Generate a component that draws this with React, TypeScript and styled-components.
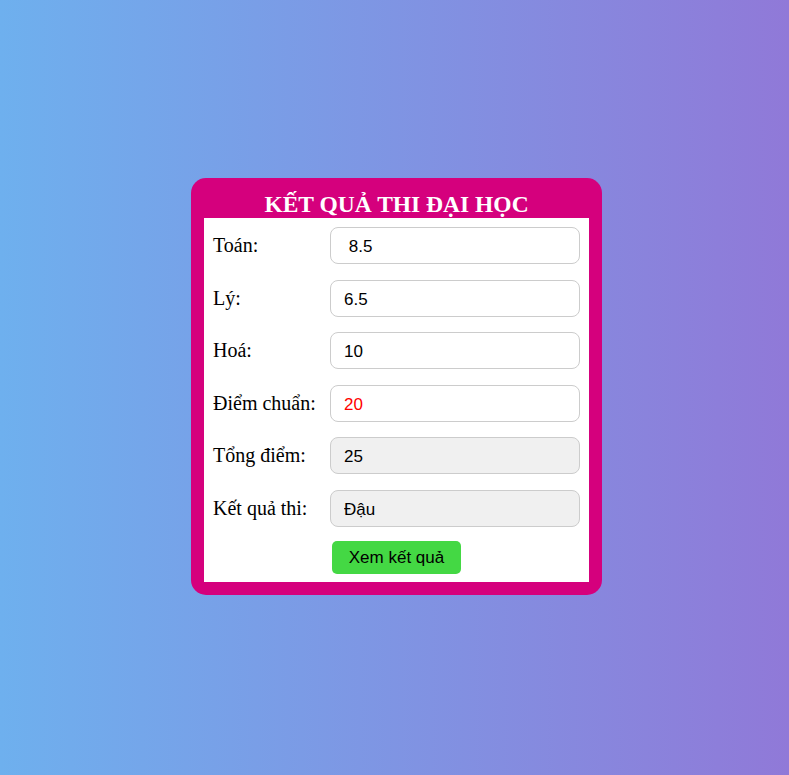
import React from "react";
import styled, { createGlobalStyle } from "styled-components";

const Global = createGlobalStyle`
  html, body { margin: 0; padding: 0; }
  body { font-family: "Liberation Serif", "Times New Roman", serif; }
`;

const Page = styled.div`
  height: 775px;
  background: linear-gradient(to right, #6eb0ee, #9079d8);
  display: flex;
  align-items: center;
  justify-content: center;
  padding: 0 0 2px 4px;
  box-sizing: border-box;
`;

const Card = styled.div`
  width: 411px;
  background: #d5007d;
  border-radius: 15px;
  padding: 0 13px 13px;
  box-sizing: border-box;
`;

const Title = styled.h2`
  margin: 0;
  height: 40px;
  line-height: 52px;
  text-align: center;
  color: #ffffff;
  font-family: "Liberation Serif", "Times New Roman", serif;
  font-weight: bold;
  font-size: 23.5px;
  white-space: nowrap;
  overflow: visible;
`;

const Body = styled.div`
  background: #ffffff;
  padding: 9px 9px 8px;
  display: grid;
  grid-template-columns: 117px 250px;
  row-gap: 15.6px;
  align-items: center;
`;

const Label = styled.label`
  font-family: "Liberation Serif", "Times New Roman", serif;
  font-size: 20px;
  color: #000;
`;

const Field = styled.input<{ $readOnly?: boolean; $red?: boolean }>`
  box-sizing: border-box;
  width: 250px;
  height: 37px;
  border: 1px solid #cccccc;
  border-radius: 8px;
  padding: 3px 12px 0 13px;
  font-family: "Liberation Sans", Arial, sans-serif;
  font-size: 17px;
  color: ${(p) => (p.$red ? "#ff0000" : "#000000")};
  background: ${(p) => (p.$readOnly ? "#f0f0f0" : "#ffffff")};
  outline: none;
`;

const Button = styled.button`
  grid-column: 2;
  justify-self: start;
  margin-left: 2px;
  margin-top: -1.6px;
  width: 129px;
  height: 33px;
  padding: 2px 0 0;
  border: none;
  border-radius: 5px;
  background: #44d844;
  color: #000;
  font-family: "Liberation Sans", Arial, sans-serif;
  font-size: 17px;
  cursor: pointer;
`;

const rows: { label: string; value: string; readOnly?: boolean; red?: boolean }[] = [
  { label: "Toán:", value: " 8.5" },
  { label: "Lý:", value: "6.5" },
  { label: "Hoá:", value: "10" },
  { label: "Điểm chuẩn:", value: "20", red: true },
  { label: "Tổng điểm:", value: "25", readOnly: true },
  { label: "Kết quả thi:", value: "Đậu", readOnly: true },
];

export default function App() {
  return (
    <>
      <Global />
      <Page>
        <Card>
          <Title>KẾT QUẢ THI ĐẠI HỌC</Title>
          <Body>
            {rows.map((r) => (
              <React.Fragment key={r.label}>
                <Label>{r.label}</Label>
                <Field
                  defaultValue={r.value}
                  readOnly={r.readOnly}
                  $readOnly={r.readOnly}
                  $red={r.red}
                />
              </React.Fragment>
            ))}
            <Button>Xem kết quả</Button>
          </Body>
        </Card>
      </Page>
    </>
  );
}
